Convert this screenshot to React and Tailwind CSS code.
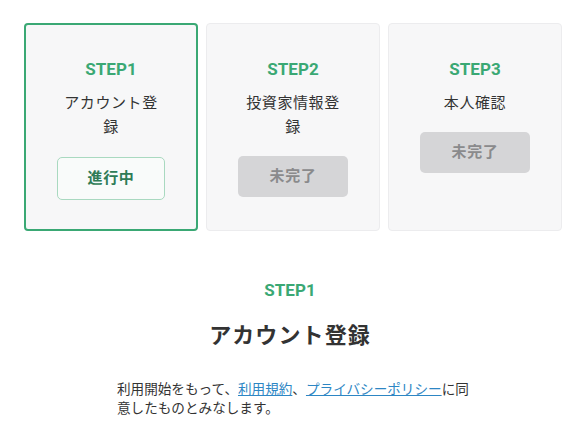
export default function App() {
  const jp = { fontFamily: 'Roboto, "Noto Sans CJK JP", sans-serif' };
  const steps = [
    { n: "STEP1", t: "アカウント登録", s: "進行中", active: true },
    { n: "STEP2", t: "投資家情報登録", s: "未完了" },
    { n: "STEP3", t: "本人確認", s: "未完了" },
  ];
  return (
    <div className="w-[580px] h-[427px] bg-white overflow-hidden" style={jp}>
      <div className="flex gap-2 pl-6 pr-[18px] pt-[23px]">
        {steps.map((st) => (
          <div
            key={st.n}
            className={
              "w-[174px] h-[208px] rounded-[4px] bg-[#f7f7f8] flex flex-col items-center pt-[32px] " +
              (st.active ? "border-2 border-[#3aa874]" : "border border-[#ececee] pt-[33px]")
            }
          >
            <div className="text-[17px] leading-6 font-bold text-[#3aa874]">{st.n}</div>
            <div className="mt-[10px] w-[100px] text-center text-[15px] leading-6 tracking-[0.04em] text-[#333]">
              {st.t}
            </div>
            {st.active ? (
              <div className="mt-[18px] w-[108px] h-[43px] rounded-[5px] border border-[#a9d9c0] bg-[#f9fbfa] flex items-center justify-center text-[15px] font-bold text-[#2f7c57] tracking-[0.04em]">
                {st.s}
              </div>
            ) : (
              <div className="mt-[17px] w-[110px] h-[41px] rounded-[5px] bg-[#d5d5d7] flex items-center justify-center text-[15px] font-bold text-[#8a8a8c] tracking-[0.04em]">
                {st.s}
              </div>
            )}
          </div>
        ))}
      </div>
      <div className="mt-[47px] text-center text-[17px] leading-6 font-bold text-[#3aa874]">STEP1</div>
      <div className="mt-[18px] text-center text-[22px] leading-8 font-bold tracking-wider text-[#333]">
        アカウント登録
      </div>
      <p className="mt-[28px] ml-[117px] w-[358px] text-[13.6px] leading-[19px] text-[#333]">
        利用開始をもって、
        <a className="text-[#2d86c4] underline">利用規約</a>、
        <a className="text-[#2d86c4] underline">プライバシーポリシー</a>
        に同意したものとみなします。
      </p>
    </div>
  );
}
